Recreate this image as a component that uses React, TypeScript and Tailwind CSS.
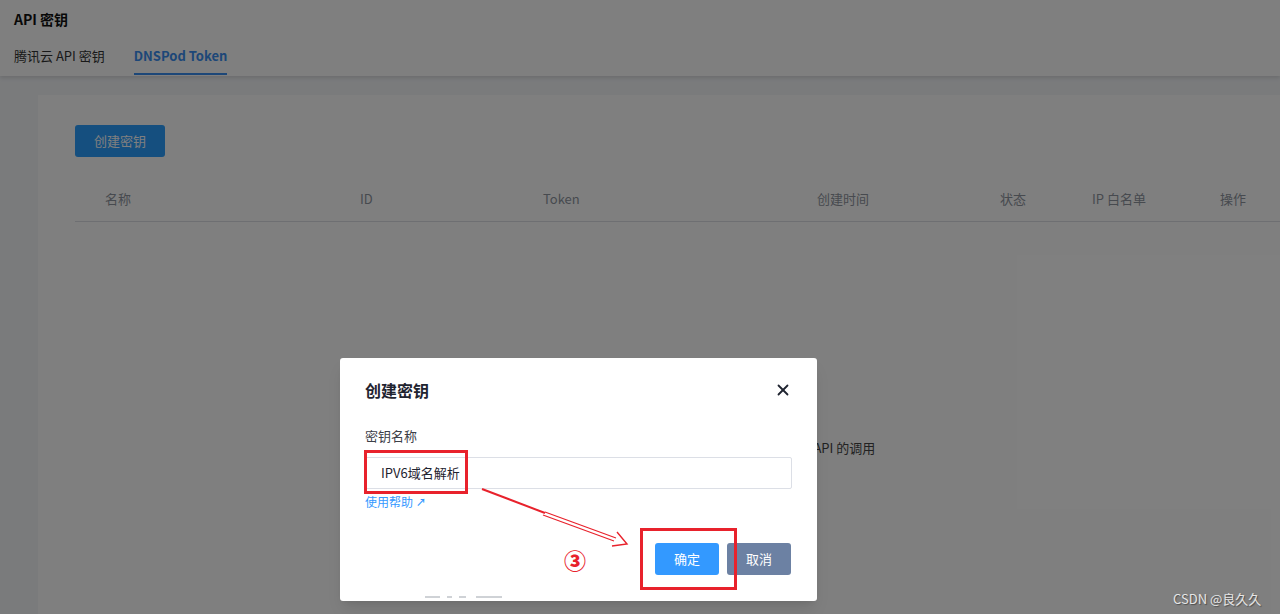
import { X } from "lucide-react";

const columns = [
  { label: "名称", w: "w-[255px]" },
  { label: "ID", w: "w-[183px]" },
  { label: "Token", w: "w-[274px]" },
  { label: "创建时间", w: "w-[183px]" },
  { label: "状态", w: "w-[92px]" },
  { label: "IP 白名单", w: "w-[128px]" },
  { label: "操作", w: "flex-1" },
];

const font = "font-['Noto_Sans_CJK_SC','Noto_Sans',sans-serif]";

const Annotations = () => (
  <svg
    className="pointer-events-none absolute inset-0 z-40"
    width="1280"
    height="614"
    viewBox="0 0 1280 614"
  >
    <g fill="none" stroke="#e8222c" strokeLinejoin="miter">
      <rect x="365.5" y="451.5" width="101" height="41" strokeWidth="3" />
      <rect x="641.5" y="529.5" width="94" height="59" strokeWidth="3" />
      <line x1="482" y1="489" x2="545" y2="513" strokeWidth="2" />
      <line x1="545" y1="512" x2="616" y2="538" strokeWidth="1.2" />
      <line x1="543" y1="515" x2="614" y2="541" strokeWidth="1.2" />
      <polyline points="617,532 627,544 612,546" strokeWidth="1.4" />
    </g>
  </svg>
);

const Dialog = () => (
  <div className="absolute left-[340px] top-[358px] z-30 flex h-[243px] w-[477px] flex-col rounded-[3px] bg-white px-[25px] pt-[22px] shadow-lg">
    <div className="flex items-center justify-between">
      <span className="text-[16px] leading-[20px] font-bold text-[#1f2430]">
        创建密钥
      </span>
      <X size={18} strokeWidth={2.4} className="text-[#1f2430]" />
    </div>
    <div className="mt-[27px] text-[13px] leading-[18px] text-[#3c4048]">
      密钥名称
    </div>
    <div className="mt-[12px] flex h-[32px] items-center rounded-[2px] border border-[#dcdfe6] pl-[15px] text-[13px] text-[#1f2430]">
      IPV6域名解析
    </div>
    <div className="mt-[5px] flex items-center gap-[3px] text-[12px] leading-[16px] text-[#3399ff]">
      使用帮助
      <span className="text-[10px] font-bold">↗</span>
    </div>
    <div className="mt-auto flex items-center justify-end gap-[8px] pb-[26px] pr-px">
      <span className="mr-[61px] text-[22px] leading-none font-black text-[#e8222c]">
        ③
      </span>
      <button className="h-[32px] w-[64px] rounded-[3px] bg-[#3399ff] text-[13px] text-white">
        确定
      </button>
      <button className="h-[32px] w-[64px] rounded-[3px] bg-[#6c81a3] text-[13px] text-white">
        取消
      </button>
    </div>
    <div className="absolute bottom-[3px] left-[85px] flex gap-[7px]">
      <div className="h-[2px] w-[15px] bg-[#cfd2d6]" />
      <div className="h-[2px] w-[5px] bg-[#cfd2d6]" />
      <div className="h-[2px] w-[7px] bg-[#cfd2d6]" />
      <div className="ml-[3px] h-[2px] w-[26px] bg-[#cfd2d6]" />
    </div>
  </div>
);

export default function App() {
  return (
    <div
      className={`relative h-[614px] w-[1280px] overflow-hidden bg-[#f4f6f9] ${font}`}
    >
      <header className="relative z-10 h-[76px] bg-white px-[14px] pt-[9px] shadow-[0_2px_4px_rgba(0,0,0,0.12)]">
        <h1 className="text-[14px] leading-[20px] font-bold text-[#111]">
          API 密钥
        </h1>
        <nav className="mt-[17px] flex gap-[29px] text-[13px]">
          <span className="pb-[9px] text-[#333]">腾讯云 API 密钥</span>
          <span className="border-b-2 border-[#3a8ef0] pb-[7px] font-bold text-[#3a8ef0]">
            DNSPod Token
          </span>
        </nav>
      </header>

      <main className="ml-[38px] mt-[19px] h-[600px] w-[1300px] bg-white px-[37px] pt-[30px]">
        <button className="h-[32px] w-[90px] rounded-[3px] bg-[#2a9eff] text-[13px] text-white">
          创建密钥
        </button>
        <div className="mt-[20px] flex h-[45px] items-center border-b border-[#dcdfe4] pl-[30px] text-[13px] text-[#8e949e]">
          {columns.map((c) => (
            <span key={c.label} className={`${c.w} whitespace-nowrap`}>
              {c.label}
            </span>
          ))}
        </div>
        <div className="mt-[216px] pl-[500px] text-[13px] text-[#444]">
          您还没有 Token，创建后可用于 DNSPod API 的调用
        </div>
      </main>

      <div className="absolute inset-0 z-20 bg-black/50" />

      <Dialog />
      <Annotations />

      <div className="absolute left-[1173px] top-[589px] z-40 text-[13px] text-[#e6e6e6] [text-shadow:1px_1px_1px_rgba(0,0,0,0.4)]">
        CSDN @良久久
      </div>
    </div>
  );
}
